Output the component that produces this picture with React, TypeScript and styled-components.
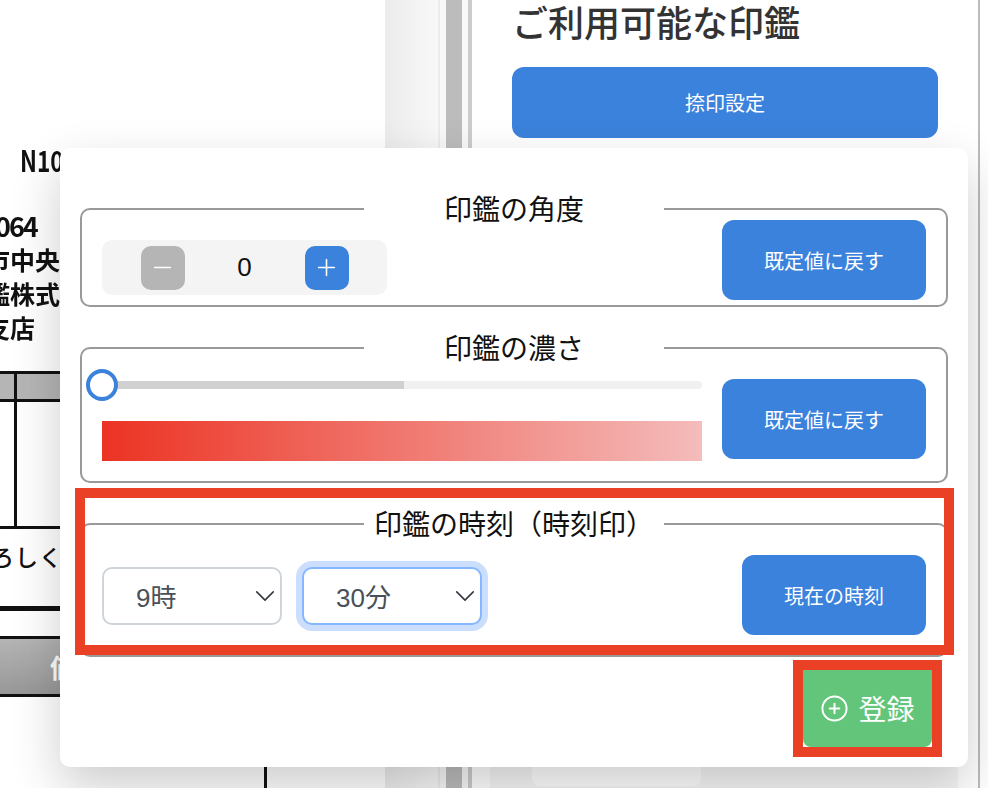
import React from "react";
import styled, { createGlobalStyle } from "styled-components";
import { Minus, Plus, CirclePlus } from "lucide-react";

const SANS = `"Liberation Sans", "Noto Sans CJK JP", sans-serif`;
const BLUE = "#3b82dc";
const RED = "#ea4025";

const Global = createGlobalStyle`
  html, body { margin: 0; padding: 0; background: #fff; }
  * { box-sizing: border-box; }
  body { font-family: ${SANS}; }
`;

const Page = styled.div`
  position: relative;
  width: 988px;
  height: 788px;
  overflow: hidden;
  display: flex;
  background: #fff;
`;

/* ---------- document preview behind the dialog ---------- */
const DocPane = styled.div`
  width: 385px;
  height: 788px;
  flex: none;
  overflow: hidden;
  padding-top: 141px;
  background: #fff;
  color: #111;
  font-family: "Noto Sans CJK JP", sans-serif;
  font-weight: 700;
`;

const DocNumber = styled.div`
  margin-left: 20px;
  height: 36px;
  font-size: 29px;
  line-height: 36px;
  white-space: nowrap;
  transform: scaleX(0.78);
  transform-origin: left center;
  filter: blur(0.3px);
`;

const DocPostal = styled.div`
  margin: 33px 0 0 -5px;
  height: 32px;
  font-size: 27px;
  line-height: 32px;
  letter-spacing: -2px;
  filter: blur(0.3px);
`;

const DocAddress = styled.div`
  margin-left: -15px;
  height: 34px;
  font-size: 25px;
  line-height: 34px;
  white-space: nowrap;
  filter: blur(0.3px);
`;

const DocTable = styled.div`
  margin-top: 27px;
  border-top: 3px solid #111;
  border-bottom: 3px solid #111;
  display: grid;
  grid-template-columns: 14px 1fr;
  grid-template-rows: 28px 124px;
`;

const DocHead = styled.div`
  background: #b5b5b5;
  border-bottom: 3px solid #111;
  &:nth-child(2) { border-left: 3px solid #111; }
`;

const DocCell = styled.div`
  &:nth-child(4) { border-left: 3px solid #111; }
`;

const DocGreeting = styled.div`
  margin: 11px 0 0 -9px;
  height: 32px;
  font-size: 23px;
  line-height: 32px;
  font-weight: 500;
  letter-spacing: 1px;
  white-space: nowrap;
`;

const DocRule = styled.div`
  margin-top: 34px;
  height: 5px;
  background: #111;
`;

const DocTotal = styled.div`
  margin-top: 25px;
  height: 61px;
  padding-left: 50px;
  border-top: 3px solid #111;
  border-bottom: 3px solid #111;
  background: linear-gradient(180deg, #b4b4b4, #989898);
  color: #fff;
  font-size: 26px;
  line-height: 55px;
`;

const DocColumn = styled.div`
  margin-left: 264px;
  width: 3px;
  height: 100px;
  background: #111;
`;

/* ---------- splitter between the panes ---------- */
const Splitter = styled.div`
  width: 87px;
  height: 788px;
  flex: none;
  display: flex;
`;

const SplitShade = styled.div`
  width: 55px;
  background: linear-gradient(90deg, #ececec, #f8f8f8);
  border-right: 2px solid #ececec;
`;

const SplitGap = styled.div<{ $w: number }>`
  width: ${(p) => p.$w}px;
  background: #f8f8f8;
`;

const SplitBar = styled.div<{ $w: number; $c: string }>`
  width: ${(p) => p.$w}px;
  background: ${(p) => p.$c};
`;

/* ---------- right pane ---------- */
const SidePane = styled.div`
  flex: none;
  width: 508px;
  height: 788px;
  display: flex;
  flex-direction: column;
  border-right: 2px solid #bbb;
  overflow: hidden;
`;

const SideHead = styled.div`
  padding: 0 40px 0 40px;
  height: 150px;
  flex: none;
`;

const SideTitle = styled.h2`
  margin: 0;
  height: 67px;
  color: #333;
  font-family: "Noto Sans CJK JP", sans-serif;
  font-size: 36px;
  font-weight: 500;
  line-height: 42px;
  white-space: nowrap;
`;

const SideButton = styled.button`
  display: block;
  width: 426px;
  height: 71px;
  border: 0;
  border-radius: 12px;
  background: ${BLUE};
  color: #fff;
  font-family: "Noto Sans CJK JP", sans-serif;
  font-size: 20px;
`;

const StampList = styled.div`
  flex: 1;
  margin: 0 20px 0 18px;
  padding-left: 42px;
  background: #f6f6f6;
`;

const StampCard = styled.div`
  width: 169px;
  height: 636px;
  background: #fff;
  border-radius: 0 0 8px 8px;
`;

/* ---------- dialog ---------- */
const Dialog = styled.div`
  position: absolute;
  left: 60px;
  top: 148px;
  width: 908px;
  height: 619px;
  padding: 50px 20px 20px;
  border-radius: 10px;
  background: #fff;
  box-shadow: 0 20px 50px rgba(0, 0, 0, 0.2);
  display: flex;
  flex-direction: column;
  gap: 30px;
`;

const Group = styled.fieldset<{ $top: number; $bottom: number }>`
  margin: 0;
  min-width: 0;
  padding: ${(p) => p.$top}px 20px ${(p) => p.$bottom}px;
  border: 2px solid #999;
  border-radius: 10px;
`;

const GroupTitle = styled.legend`
  display: block;
  width: 300px;
  height: 22px;
  margin: 0 auto;
  padding: 0;
  color: #111;
  font-family: "Noto Sans CJK JP", sans-serif;
  font-size: 28px;
  line-height: 20px;
  text-align: center;
  white-space: nowrap;
`;

const GroupRow = styled.div`
  display: flex;
  justify-content: space-between;
  align-items: flex-start;
`;

const ActionButton = styled.button<{ $w: number; $mt?: number }>`
  flex: none;
  width: ${(p) => p.$w}px;
  height: 80px;
  margin-top: ${(p) => p.$mt ?? 0}px;
  border: 0;
  border-radius: 12px;
  background: ${BLUE};
  color: #fff;
  font-family: "Noto Sans CJK JP", sans-serif;
  font-size: 20px;
`;

const Stepper = styled.div`
  width: 285px;
  height: 55px;
  margin-top: 20px;
  border-radius: 10px;
  background: #f4f4f4;
  display: flex;
  align-items: center;
  justify-content: center;
`;

const StepButton = styled.button<{ $on: boolean }>`
  width: 44px;
  height: 44px;
  padding: 0;
  border: 0;
  border-radius: 10px;
  background: ${(p) => (p.$on ? BLUE : "#b5b5b5")};
  color: #fff;
  display: flex;
  align-items: center;
  justify-content: center;
`;

const StepValue = styled.div`
  width: 120px;
  text-align: center;
  color: #111;
  font-size: 26px;
`;

const SliderColumn = styled.div`
  width: 600px;
  display: flex;
  flex-direction: column;
  gap: 20px;
`;

const Slider = styled.div`
  position: relative;
  height: 32px;
  display: flex;
  align-items: center;
`;

const Track = styled.div`
  width: 100%;
  height: 8px;
  border-radius: 4px;
  background: linear-gradient(90deg, #d0d0d0 50.3%, #f0f0f0 50.3%);
`;

const Thumb = styled.div`
  position: absolute;
  left: -16px;
  top: 0;
  width: 32px;
  height: 32px;
  border: 4px solid ${BLUE};
  border-radius: 50%;
  background: #fff;
`;

const Density = styled.div`
  height: 40px;
  background: linear-gradient(90deg, #ec3323, #f4bcbb);
`;

const TimeFields = styled.div`
  display: flex;
  gap: 20px;
  margin-top: 12px;
`;

const SelectBox = styled.div`
  position: relative;
  width: 180px;
  height: 58px;
`;

const Select = styled.select<{ $focus?: boolean }>`
  appearance: none;
  width: 100%;
  height: 100%;
  padding: 3px 40px 0 32px;
  border: 2px solid ${(p) => (p.$focus ? "#86b7fe" : "#ced4da")};
  border-radius: 10px;
  outline: 0;
  background: #fff;
  box-shadow: ${(p) => (p.$focus ? "0 0 0 6px #cbdefd" : "none")};
  color: #495057;
  font-family: ${SANS};
  font-size: 26px;
`;

const Chevron = styled.svg`
  position: absolute;
  right: 6px;
  top: 18px;
  width: 22px;
  height: 22px;
  fill: none;
  stroke: #343a40;
  stroke-width: 1.15;
  stroke-linecap: round;
  stroke-linejoin: round;
  pointer-events: none;
`;

const Footer = styled.div`
  display: flex;
  justify-content: flex-end;
  margin-top: -22px;
  padding-right: 16px;
`;

const SubmitButton = styled.button`
  width: 129px;
  height: 82px;
  padding: 4px 0 0;
  border: 0;
  border-radius: 0 0 8px 8px;
  background: #62c57a;
  color: #fff;
  font-family: "Noto Sans CJK JP", sans-serif;
  font-size: 28px;
  display: flex;
  align-items: center;
  justify-content: center;
  gap: 9px;
`;

const Highlight = styled.div<{ $x: number; $y: number; $w: number; $h: number }>`
  position: absolute;
  left: ${(p) => p.$x}px;
  top: ${(p) => p.$y}px;
  width: ${(p) => p.$w}px;
  height: ${(p) => p.$h}px;
  border: 10px solid ${RED};
  pointer-events: none;
`;

const TimeSelect = ({ value, focus }: { value: string; focus?: boolean }) => (
  <SelectBox>
    <Select $focus={focus} defaultValue={value}>
      <option>{value}</option>
    </Select>
    <Chevron viewBox="0 0 16 16">
      <path d="m2 5 6 6 6-6" />
    </Chevron>
  </SelectBox>
);

export default function App() {
  return (
    <Page>
      <Global />
      <DocPane>
        <DocNumber>N10</DocNumber>
        <DocPostal>064</DocPostal>
        <DocAddress>市中央区</DocAddress>
        <DocAddress>鑑株式会社</DocAddress>
        <DocAddress>支店</DocAddress>
        <DocTable>
          <DocHead />
          <DocHead />
          <DocCell />
          <DocCell />
        </DocTable>
        <DocGreeting>ろしくお願いします</DocGreeting>
        <DocRule />
        <DocTotal>価</DocTotal>
        <DocColumn />
      </DocPane>

      <Splitter>
        <SplitShade />
        <SplitGap $w={6} />
        <SplitBar $w={16} $c="#bcbcbc" />
        <SplitGap $w={6} />
        <SplitBar $w={4} $c="#cccccc" />
      </Splitter>

      <SidePane>
        <SideHead>
          <SideTitle>ご利用可能な印鑑</SideTitle>
          <SideButton>捺印設定</SideButton>
        </SideHead>
        <StampList>
          <StampCard />
        </StampList>
      </SidePane>

      <Dialog>
        <Group $top={0} $bottom={5}>
          <GroupTitle>印鑑の角度</GroupTitle>
          <GroupRow>
            <Stepper>
              <StepButton $on={false}>
                <Minus size={27} strokeWidth={1.4} />
              </StepButton>
              <StepValue>0</StepValue>
              <StepButton $on>
                <Plus size={27} strokeWidth={1.4} />
              </StepButton>
            </Stepper>
            <ActionButton $w={204}>既定値に戻す</ActionButton>
          </GroupRow>
        </Group>

        <Group $top={10} $bottom={20}>
          <GroupTitle>印鑑の濃さ</GroupTitle>
          <GroupRow>
            <SliderColumn>
              <Slider>
                <Track />
                <Thumb />
              </Slider>
              <Density />
            </SliderColumn>
            <ActionButton $w={204} $mt={10}>既定値に戻す</ActionButton>
          </GroupRow>
        </Group>

        <Group $top={20} $bottom={20}>
          <GroupTitle>印鑑の時刻（時刻印）</GroupTitle>
          <GroupRow>
            <TimeFields>
              <TimeSelect value="9時" />
              <TimeSelect value="30分" focus />
            </TimeFields>
            <ActionButton $w={184}>現在の時刻</ActionButton>
          </GroupRow>
        </Group>

        <Footer>
          <SubmitButton>
            <CirclePlus size={29} strokeWidth={1.6} />
            登録
          </SubmitButton>
        </Footer>

        <Highlight $x={15} $y={340} $w={879} $h={167} />
        <Highlight $x={733} $y={512} $w={149} $h={97} />
      </Dialog>
    </Page>
  );
}
